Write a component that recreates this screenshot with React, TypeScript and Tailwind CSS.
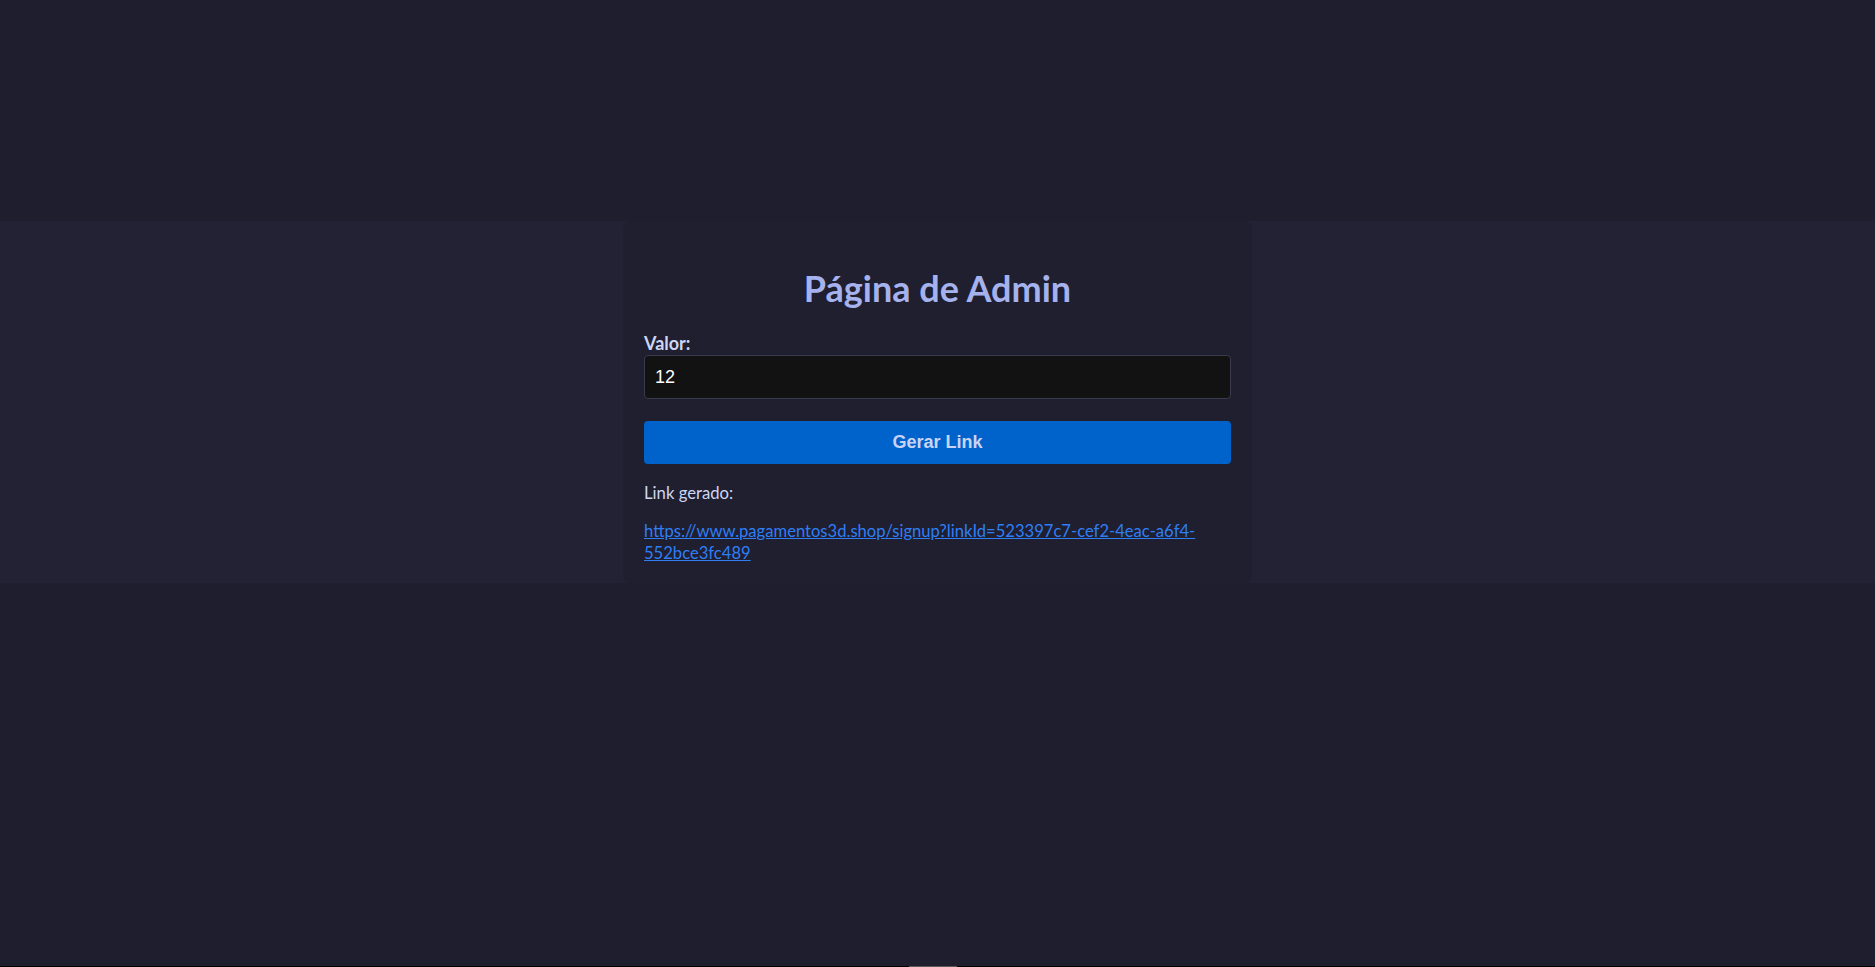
import React from "react";

export default function App() {
  return (
    <div className="relative flex h-[967px] w-full flex-col overflow-hidden bg-[#1e1e2e] pt-[221px]" style={{ fontFamily: "Lato, 'Noto Sans', sans-serif" }}>
      <div className="flex w-full justify-center bg-[#232235]">
        <div className="flex w-[629px] flex-col rounded-lg bg-[#1f1f2f] px-[21px] pb-[19px] pt-[45px]">
          <h1 className="text-center text-[36px] font-bold leading-[44px] text-[#a5b2ee]">Página de Admin</h1>
          <label className="mt-[22px] block text-[18px] font-bold leading-[22px] text-[#cdd6f4]">Valor:</label>
          <input
            readOnly
            value="12"
            className="mt-[1px] h-[44px] w-full rounded-[4px] border border-[#3a3a4e] bg-[#121212] pl-[10px] text-[18px] text-white outline-none"
            style={{ fontFamily: "'Liberation Sans', Arial, sans-serif" }}
          />
          <button
            className="mt-[22px] h-[43px] w-full rounded-[4px] bg-[#0063cc] text-[18px] font-bold text-[#cad3f3]"
            style={{ fontFamily: "'Liberation Sans', Arial, sans-serif" }}
          >
            Gerar Link
          </button>
          <p className="mt-[19px] text-[16.7px] leading-[20px] text-[#cdd6f4]">Link gerado:</p>
          <a
            href="#"
            className="mt-[17px] block break-words text-[16.6px] leading-[22px] text-[#2f7ef6] underline"
          >
            https://www.pagamentos3d.shop/signup?linkId=523397c7-cef2-4eac-a6f4-552bce3fc489
          </a>
        </div>
      </div>
      <div className="flex-1" />
      <div className="flex h-[1px] w-full bg-black">
        <div className="ml-[909px] h-[1px] w-[48px] bg-[#5a5a5a]" />
      </div>
    </div>
  );
}
